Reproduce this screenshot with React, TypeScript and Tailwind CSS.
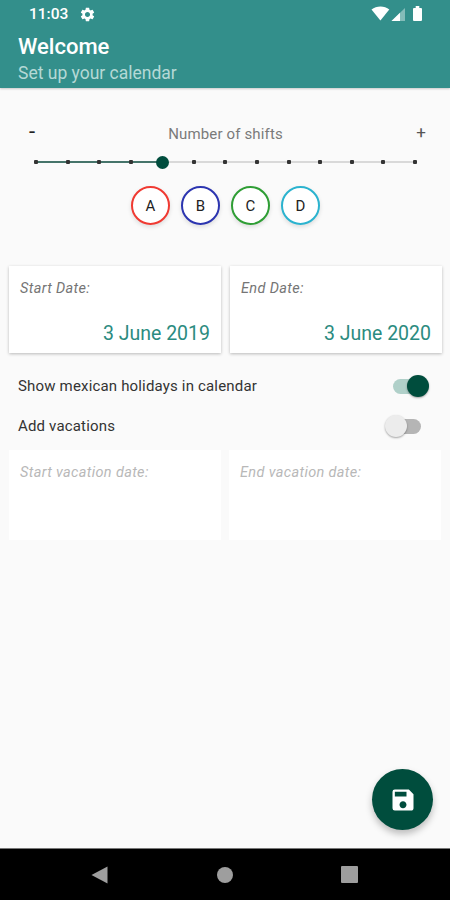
import clsx from 'clsx';
import { useState } from 'react';
import { MdSave, MdSettings } from 'react-icons/md';

const MAX_SHIFTS = 12;

const shifts = [
  { label: 'A', border: 'border-[#f03a32]' },
  { label: 'B', border: 'border-[#2c35b0]' },
  { label: 'C', border: 'border-[#2f9e35]' },
  { label: 'D', border: 'border-[#2bb3cf]' },
];

function StatusBar() {
  return (
    <div className="flex h-7 items-center justify-between pl-[29px] pr-[26px]">
      <div className="flex items-center gap-[11px]">
        <span className="pt-[2px] text-[15.5px] font-medium leading-none">11:03</span>
        <MdSettings className="size-[17px]" />
      </div>
      <svg width="53" height="18" viewBox="0 0 53 18" fill="currentColor">
        <path d="M0.500 4.500C5.500 0.500 13.500 0.500 18.300 4.500L9.400 15.500z" />
        <path d="M20.500 16L34 3v13z" opacity="0.4" />
        <path d="M20.500 16L29 7.800V16z" />
        <path d="M42 4a1 1 0 0 1 1-1h1.700V1h3.600v2H50a1 1 0 0 1 1 1V15a1 1 0 0 1-1 1h-7a1 1 0 0 1-1-1z" />
      </svg>
    </div>
  );
}

function ShiftSlider({ value }: { value: number }) {
  return (
    <div className="relative ml-[34px] mr-[33px] flex h-3 items-center justify-between">
      <div className="absolute inset-x-[2px] top-[5px] h-[2px] bg-[#d9d9d9]" />
      <div
        className="absolute left-[2px] top-[5px] h-[2px] bg-[#45746a]"
        style={{ width: `${((value / MAX_SHIFTS) * 100).toFixed(2)}%` }}
      />
      {Array.from({ length: MAX_SHIFTS + 1 }, (_, i) => (
        <span key={i} className="relative flex size-1 items-center justify-center rounded-[1px] bg-[#333]">
          {i === value && (
            <span className="absolute size-[13px] rounded-full bg-[#004d3d]" />
          )}
        </span>
      ))}
    </div>
  );
}

type DateCardProps = {
  label: string
  date?: string
}

function DateCard({ label, date }: DateCardProps) {
  return (
    <div
      className={clsx(
        'flex flex-1 flex-col justify-between bg-white pl-[11px] pr-[11px] pt-[14px]',
        date ? 'h-[87px] pb-[6px] shadow-[0_1px_3px_rgba(0,0,0,0.26)]' : 'h-[90px]'
      )}
    >
      <span
        className={clsx(
          'text-[14.5px] italic leading-[18px] tracking-[0.35px]',
          date ? 'text-[#757575]' : 'text-[#b8b8b8]'
        )}
      >
        {label}
      </span>
      {date && <span className="text-right text-[19.5px] leading-[26px] text-[#2b8b80]">{date}</span>}
    </div>
  );
}

function Toggle({ on, onClick }: { on: boolean, onClick: () => void }) {
  return (
    <button
      role="switch"
      aria-checked={on}
      onClick={onClick}
      className={clsx('relative h-[15px] w-[28px] rounded-full', on ? 'bg-[#b0d0c9]' : 'bg-[#b5b5b5]')}
    >
      <span
        className={clsx(
          'absolute top-[-4px] size-[22px] rounded-full shadow-[0_1px_2px_rgba(0,0,0,0.35)]',
          on ? 'right-[-8px] bg-[#004d3d]' : 'left-[-8px] bg-[#ececec]'
        )}
      />
    </button>
  );
}

export default function App() {
  const [showHolidays, setShowHolidays] = useState(true);
  const [addVacations, setAddVacations] = useState(false);

  return (
    <div className="relative flex h-[900px] w-[450px] flex-col overflow-hidden bg-[#fafafa] font-['Roboto',sans-serif]">
      <header className="h-[88px] bg-[#338f8b] text-white shadow-[0_1px_2px_rgba(0,0,0,0.2)]">
        <StatusBar />
        <div className="pl-[18px]">
          <h1 className="pt-[5px] text-[22px] font-medium leading-[28px]">Welcome</h1>
          <p className="text-[17.5px] leading-[24px] text-[#b5d9d6]">Set up your calendar</p>
        </div>
      </header>

      <main className="flex flex-1 flex-col">
        <div className="mt-[36px] flex h-5 items-center justify-between pl-[29px] pr-[24px]">
          <button className="w-4 pb-[4px] text-left text-[22px] leading-none text-[#222]">-</button>
          <span className="pr-[4px] text-[15px] tracking-[0.15px] text-[#7a7a7a]">Number of shifts</span>
          <button className="w-4 pb-[3px] text-right text-[17px] leading-none text-[#555]">+</button>
        </div>
        <div className="mt-[12px]">
          <ShiftSlider value={4} />
        </div>

        <div className="mt-[18px] flex justify-center gap-[11px] pl-[1px]">
          {shifts.map((shift) => (
            <div
              key={shift.label}
              className={clsx(
                'flex size-[39px] items-center justify-center rounded-full border-2 bg-white pt-px text-[15px] text-[#222] shadow-[0_2px_4px_rgba(0,0,0,0.12)]',
                shift.border
              )}
            >
              {shift.label}
            </div>
          ))}
        </div>

        <div className="mt-[41px] flex gap-[9px] pl-[9px] pr-[8px]">
          <DateCard label="Start Date:" date="3 June 2019" />
          <DateCard label="End Date:" date="3 June 2020" />
        </div>

        <div className="mt-[13px] flex flex-col pl-[18px] pr-[29px] text-[15px] tracking-[0.17px] text-[#333]">
          <div className="flex h-10 items-center justify-between">
            Show mexican holidays in calendar
            <Toggle on={showHolidays} onClick={() => setShowHolidays(!showHolidays)} />
          </div>
          <div className="flex h-10 items-center justify-between">
            Add vacations
            <Toggle on={addVacations} onClick={() => setAddVacations(!addVacations)} />
          </div>
        </div>

        <div className="mt-[4px] flex gap-[8px] pl-[9px] pr-[9px]">
          <DateCard label="Start vacation date:" />
          <DateCard label="End vacation date:" />
        </div>
      </main>

      <button
        aria-label="Save"
        className="absolute bottom-[70px] right-[17px] flex size-[61px] items-center justify-center rounded-full bg-[#004d3d] text-white shadow-[0_4px_7px_rgba(0,0,0,0.25)]"
      >
        <MdSave className="size-[28px]" />
      </button>

      <nav className="flex h-[52px] items-center justify-between border-t border-[#777] bg-black pl-[91px] pr-[92px] text-[#9e9e9e]">
        <svg width="18" height="18" viewBox="0 0 18 18" fill="currentColor">
          <path d="M16.500 0.500v17L0.500 9z" />
        </svg>
        <span className="size-[16px] rounded-full bg-[#9e9e9e]" />
        <span className="size-[17px] rounded-[1px] bg-[#9e9e9e]" />
      </nav>
    </div>
  );
}
